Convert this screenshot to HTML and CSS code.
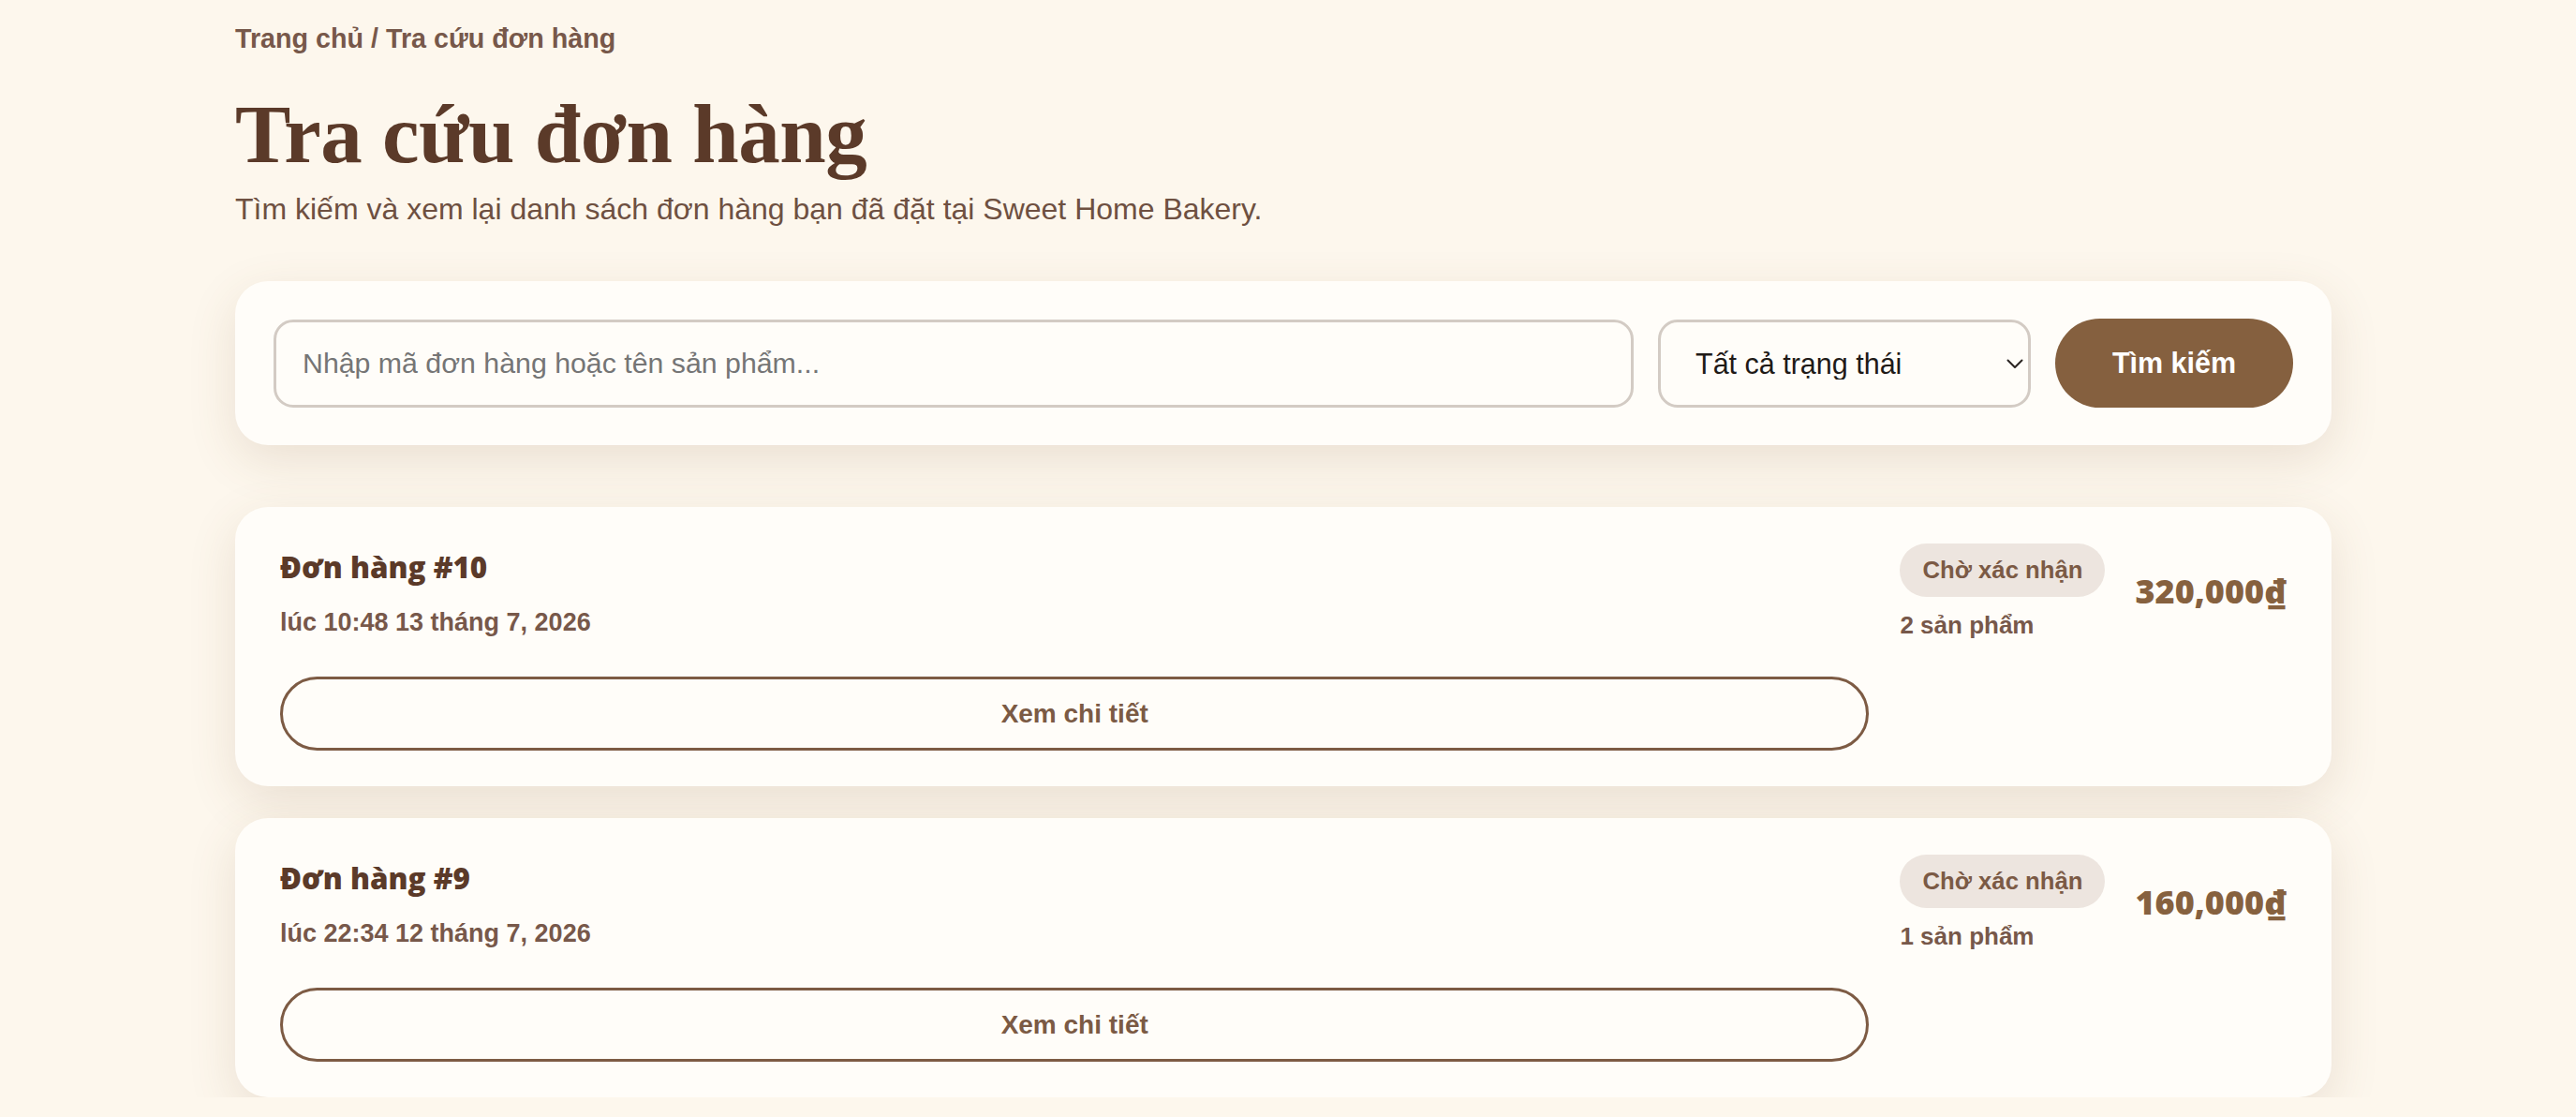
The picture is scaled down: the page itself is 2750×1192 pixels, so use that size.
FILE: index.html
```html
<!DOCTYPE html>
<html lang="vi">
<head>
<meta charset="utf-8">
<title>Tra cứu đơn hàng - Sweet Home Bakery</title>
<link rel="stylesheet" href="styles.css">
</head>
<body>
<main class="page">
  <nav class="crumbs">Trang chủ / Tra cứu đơn hàng</nav>
  <h1 class="title">Tra cứu đơn hàng</h1>
  <p class="lead">Tìm kiếm và xem lại danh sách đơn hàng bạn đã đặt tại Sweet Home Bakery.</p>

  <form class="search">
    <input class="search-input" type="text" placeholder="Nhập mã đơn hàng hoặc tên sản phẩm...">
    <div class="select-wrap">
      <select class="status-select">
        <option>Tất cả trạng thái</option>
        <option>Chờ xác nhận</option>
        <option>Đang giao</option>
        <option>Hoàn thành</option>
      </select>
      <svg class="chev" width="18" height="11" viewBox="0 0 18 11" aria-hidden="true">
        <path d="M1.5 1.5 L9 9 L16.5 1.5" fill="none" stroke="#2b2522" stroke-width="2" stroke-linecap="round" stroke-linejoin="round"/>
      </svg>
    </div>
    <button class="btn-search" type="button">Tìm kiếm</button>
  </form>

  <section class="orders">
    <article class="order">
      <div class="order-main">
        <h2 class="order-title">Đơn hàng #10</h2>
        <div class="order-date">lúc 10:48 13 tháng 7, 2026</div>
        <button class="btn-detail" type="button">Xem chi tiết</button>
      </div>
      <div class="order-side">
        <div class="order-status">
          <span class="badge">Chờ xác nhận</span>
          <span class="count">2 sản phẩm</span>
        </div>
        <div class="price">320,000₫</div>
      </div>
    </article>

    <article class="order">
      <div class="order-main">
        <h2 class="order-title">Đơn hàng #9</h2>
        <div class="order-date">lúc 22:34 12 tháng 7, 2026</div>
        <button class="btn-detail" type="button">Xem chi tiết</button>
      </div>
      <div class="order-side">
        <div class="order-status">
          <span class="badge">Chờ xác nhận</span>
          <span class="count">1 sản phẩm</span>
        </div>
        <div class="price">160,000₫</div>
      </div>
    </article>
  </section>
</main>
</body>
</html>
```

FILE: styles.css
```css
* {
  box-sizing: border-box;
}

html, body {
  margin: 0;
  background: #fdf7ed;
}

body {
  padding-right: 10px;
  font-family: "Liberation Sans", Arial, sans-serif;
  color: #5b3a29;
}

.page {
  max-width: 2238px;
  margin: 0 auto;
  padding-top: 20px;
}

.crumbs {
  font-size: 28.7px;
  line-height: 42px;
  font-weight: 700;
  color: #77584a;
}

.title {
  margin: 30px 0 0;
  font-family: "Liberation Serif", "Times New Roman", serif;
  font-weight: 700;
  font-size: 89px;
  line-height: 103px;
  color: #5b3a29;
  letter-spacing: -0.5px;
}

.lead {
  margin: 7px 0 0;
  font-size: 32px;
  line-height: 42px;
  color: #6e5041;
}

/* search bar */
.search {
  margin-top: 56px;
  display: flex;
  align-items: center;
  gap: 26px;
  padding: 40px 41px;
  background: #fffdf9;
  border-radius: 35px;
  box-shadow: 0 16px 52px rgba(120, 86, 52, 0.14);
}

.search-input {
  flex: 1;
  min-width: 0;
  height: 94px;
  padding: 0 28px;
  border: 3px solid #d3cbc4;
  border-radius: 21px;
  background: #fffdf9;
  font-family: "Liberation Sans", Arial, sans-serif;
  font-size: 30.3px;
  color: #2b2522;
  outline: none;
}

.search-input::placeholder {
  color: #757575;
}

.select-wrap {
  position: relative;
  width: 398px;
  flex: none;
}

.status-select {
  width: 100%;
  height: 94px;
  padding: 0 50px 0 37px;
  border: 3px solid #d3cbc4;
  border-radius: 21px;
  background: #fffdf9;
  font-family: "Liberation Sans", Arial, sans-serif;
  font-size: 30.5px;
  color: #1f1a17;
  appearance: none;
  -webkit-appearance: none;
  outline: none;
}

.chev {
  position: absolute;
  right: 8px;
  top: 42px;
  pointer-events: none;
}

.btn-search {
  flex: none;
  width: 254px;
  height: 95px;
  border: 0;
  border-radius: 48px;
  background: #85603f;
  color: #ffffff;
  font-family: "Liberation Sans", Arial, sans-serif;
  font-weight: 700;
  font-size: 30.5px;
  cursor: pointer;
}

/* order list */
.orders {
  margin-top: 66px;
  display: flex;
  flex-direction: column;
  gap: 34px;
}

.order {
  display: flex;
  align-items: flex-start;
  gap: 33px;
  padding: 43px 48px 38px;
  background: #fffdf9;
  border-radius: 35px;
  box-shadow: 0 16px 52px rgba(120, 86, 52, 0.14);
}

.order-main {
  flex: 1;
  min-width: 0;
  display: flex;
  flex-direction: column;
}

.order-title {
  margin: 0;
  font-family: "Open Sans", Lato, sans-serif;
  font-weight: 800;
  font-size: 31.4px;
  line-height: 42px;
  color: #5b3a29;
}

.order-date {
  margin-top: 18px;
  font-size: 27px;
  line-height: 40px;
  font-weight: 700;
  color: #77584a;
}

.btn-detail {
  margin-top: 38px;
  height: 79px;
  border: 3px solid #7d5b44;
  border-radius: 40px;
  background: transparent;
  color: #7b5a44;
  font-family: "Liberation Sans", Arial, sans-serif;
  font-weight: 700;
  font-size: 28px;
  cursor: pointer;
}

.order-side {
  display: flex;
  align-items: center;
  gap: 32px;
  margin-top: -4px;
}

.order-status {
  display: flex;
  flex-direction: column;
  align-items: flex-start;
}

.badge {
  display: inline-block;
  padding: 13px 24px;
  border-radius: 29px;
  background: #ede5df;
  color: #7b5a45;
  font-size: 25.7px;
  line-height: 31px;
  font-weight: 700;
}

.count {
  margin-top: 11px;
  font-size: 26px;
  line-height: 39px;
  font-weight: 700;
  color: #77584a;
}

.price {
  font-family: "Open Sans", Lato, sans-serif;
  font-weight: 800;
  font-size: 36px;
  line-height: 44px;
  color: #86613f;
  margin-top: -6px;
}
```
